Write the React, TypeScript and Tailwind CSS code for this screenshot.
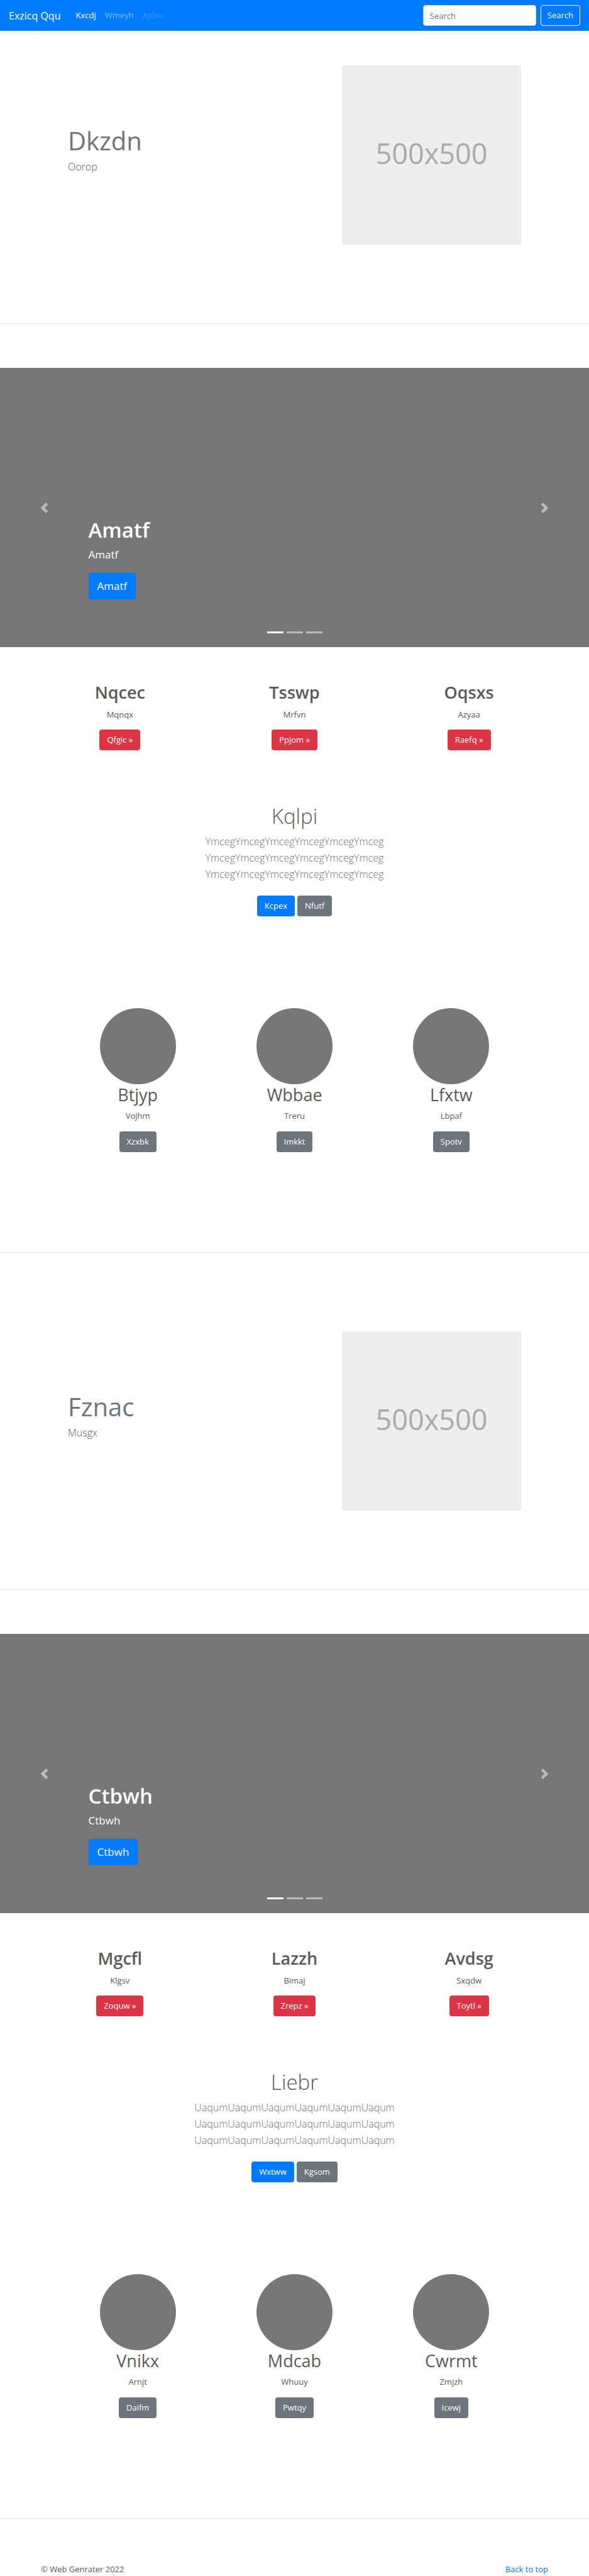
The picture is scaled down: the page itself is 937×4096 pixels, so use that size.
type Item = { title: string; text: string; action: string };

type Block = {
  hero: { title: string; text: string };
  slide: string;
  features: Item[];
  intro: { title: string; line: string; primary: string; secondary: string };
  people: Item[];
};

const blocks: Block[] = [
  {
    hero: { title: "Dkzdn", text: "Oorop" },
    slide: "Amatf",
    features: [
      { title: "Nqcec", text: "Mqnqx", action: "Qfgic »" },
      { title: "Tsswp", text: "Mrfvn", action: "Ppjom »" },
      { title: "Oqsxs", text: "Azyaa", action: "Raefq »" },
    ],
    intro: { title: "Kqlpi", line: "YmcegYmcegYmcegYmcegYmcegYmceg", primary: "Kcpex", secondary: "Nfutf" },
    people: [
      { title: "Btjyp", text: "Vojhm", action: "Xzxbk" },
      { title: "Wbbae", text: "Treru", action: "Imkkt" },
      { title: "Lfxtw", text: "Lbpaf", action: "Spotv" },
    ],
  },
  {
    hero: { title: "Fznac", text: "Musgx" },
    slide: "Ctbwh",
    features: [
      { title: "Mgcfl", text: "Klgsv", action: "Zoquw »" },
      { title: "Lazzh", text: "Bimaj", action: "Zrepz »" },
      { title: "Avdsg", text: "Sxqdw", action: "Toytl »" },
    ],
    intro: { title: "Liebr", line: "UaqumUaqumUaqumUaqumUaqumUaqum", primary: "Wxtww", secondary: "Kgsom" },
    people: [
      { title: "Vnikx", text: "Arnjt", action: "Daifm" },
      { title: "Mdcab", text: "Whuuy", action: "Pwtqy" },
      { title: "Cwrmt", text: "Zmjzh", action: "Icewj" },
    ],
  },
];

const tones = {
  primary: "bg-[#007bff]",
  secondary: "bg-[#6c757d]",
  danger: "bg-[#dc3545]",
};

function Button({ tone, children }: { tone: keyof typeof tones; children: string }) {
  return (
    <a
      href="#"
      className={`inline-flex h-[33px] items-center rounded px-3 text-[13px] text-white ${tones[tone]}`}
    >
      {children}
    </a>
  );
}

function Divider() {
  return <hr className="mb-[70px] border-t border-[#e5e5e5]" />;
}

function NavBar() {
  return (
    <nav className="flex h-[49px] items-center bg-[#007bff] px-3.5">
      <a href="#" className="mr-6 text-base text-white">
        Exzicq Qqu
      </a>
      <div className="flex flex-1 gap-3.5 text-[13px]">
        <a href="#" className="text-white">Kxcdj</a>
        <a href="#" className="text-white/50">Wmeyh</a>
        <a href="#" aria-disabled="true" className="text-white/25">Ajdxu</a>
      </div>
      <form className="flex gap-[7px]" onSubmit={(e) => e.preventDefault()}>
        <input
          type="search"
          aria-label="Search"
          placeholder="Search"
          className="h-[33px] w-[180px] rounded border border-[#ced4da] bg-white px-2.5 text-[13px] text-[#495057] placeholder:text-[#6c757d]"
        />
        <button type="submit" className="h-[33px] rounded border border-[#f8f9fa] px-2.5 text-[13px] text-[#f8f9fa]">
          Search
        </button>
      </form>
    </nav>
  );
}

function Hero({ title, text }: Block["hero"]) {
  return (
    <section className="flex items-start justify-between px-[108px] pt-[55px] pb-[125px]">
      <div className="mt-[94px]">
        <h2 className="mb-0.5 text-[40px] leading-[52px] text-[#6c757d]">{title}</h2>
        <p className="text-base leading-[26px] font-light">{text}</p>
      </div>
      <div
        role="img"
        aria-label="500x500"
        className="flex size-[285px] items-center justify-center bg-[#eeeeee] pb-1.5 text-[45px] text-[#aaaaaa]"
      >
        500x500
      </div>
    </section>
  );
}

function Arrow({ d }: { d: string }) {
  return (
    <svg viewBox="0 0 8 8" className="size-[17px]" fill="#fff" aria-hidden="true">
      <path d={d} />
    </svg>
  );
}

function Carousel({ label }: { label: string }) {
  return (
    <section className="relative flex h-[444px] flex-col items-start justify-end bg-[#777777] px-[15%] pb-[76px] text-white">
      <h1 className="mb-[5px] text-[33px] leading-[42px] font-semibold">{label}</h1>
      <p className="mb-4 text-[17px] leading-[26px]">{label}</p>
      <a href="#" className="flex h-[42px] items-center rounded bg-[#007bff] px-3.5 text-[17px]">
        {label}
      </a>
      <button
        type="button"
        aria-label="Previous"
        className="absolute inset-y-0 left-0 flex w-[15%] items-center justify-center opacity-50"
      >
        <Arrow d="M5.25 0l-4 4 4 4 1.5-1.5L4.25 4l2.5-2.5L5.25 0z" />
      </button>
      <button
        type="button"
        aria-label="Next"
        className="absolute inset-y-0 right-0 flex w-[15%] items-center justify-center opacity-50"
      >
        <Arrow d="M2.75 0l-1.5 1.5L3.75 4l-2.5 2.5L2.75 8l4-4-4-4z" />
      </button>
      <div className="absolute inset-x-0 bottom-[22px] flex justify-center gap-[5px]">
        <button type="button" aria-label="Slide 1" className="h-[3px] w-[26px] bg-white" />
        <button type="button" aria-label="Slide 2" className="h-[3px] w-[26px] bg-white/50" />
        <button type="button" aria-label="Slide 3" className="h-[3px] w-[26px] bg-white/50" />
      </div>
    </section>
  );
}

function Features({ items }: { items: Item[] }) {
  return (
    <section className="mx-auto grid max-w-[833px] grid-cols-3 pt-[55px] text-center">
      {items.map((item) => (
        <div key={item.title} className="flex flex-col items-center">
          <h2 className="mb-2 text-[27px] leading-[34px] font-semibold">{item.title}</h2>
          <p className="mb-[13px] text-[13px] leading-[21px]">{item.text}</p>
          <Button tone="danger">{item.action}</Button>
        </div>
      ))}
    </section>
  );
}

function Intro({ title, line, primary, secondary }: Block["intro"]) {
  return (
    <section className="pt-[84px] text-center">
      <h1 className="mb-1.5 text-[33px] leading-[42px] font-light">{title}</h1>
      <p className="mb-[21px] text-base leading-[26px] font-light text-[#6c757d]">
        {line}
        <br />
        {line}
        <br />
        {line}
      </p>
      <div className="flex justify-center gap-1">
        <Button tone="primary">{primary}</Button>
        <Button tone="secondary">{secondary}</Button>
      </div>
    </section>
  );
}

function People({ items }: { items: Item[] }) {
  return (
    <section className="mx-auto grid max-w-[748px] grid-cols-3 pt-[146px] pb-[159px] text-center">
      {items.map((item) => (
        <div key={item.title} className="flex flex-col items-center">
          <div className="size-[121px] rounded-full bg-[#777777]" />
          <h2 className="mb-1.5 text-[27px] leading-[34px]">{item.title}</h2>
          <p className="mb-3.5 text-[13px] leading-[21px]">{item.text}</p>
          <Button tone="secondary">{item.action}</Button>
        </div>
      ))}
    </section>
  );
}

export default function App() {
  return (
    <div className="bg-white font-['Open_Sans','Noto_Sans',sans-serif] text-[#5a5a5a]">
      <NavBar />
      <main>
        {blocks.map((block) => (
          <div key={block.slide}>
            <Hero {...block.hero} />
            <Divider />
            <Carousel label={block.slide} />
            <Features items={block.features} />
            <Intro {...block.intro} />
            <People items={block.people} />
            <Divider />
          </div>
        ))}
      </main>
      <footer className="mx-auto flex max-w-[833px] justify-between px-[13px] text-[13px] leading-[21px]">
        <p>© Web Genrater 2022</p>
        <a href="#" className="text-[#007bff]">Back to top</a>
      </footer>
    </div>
  );
}
